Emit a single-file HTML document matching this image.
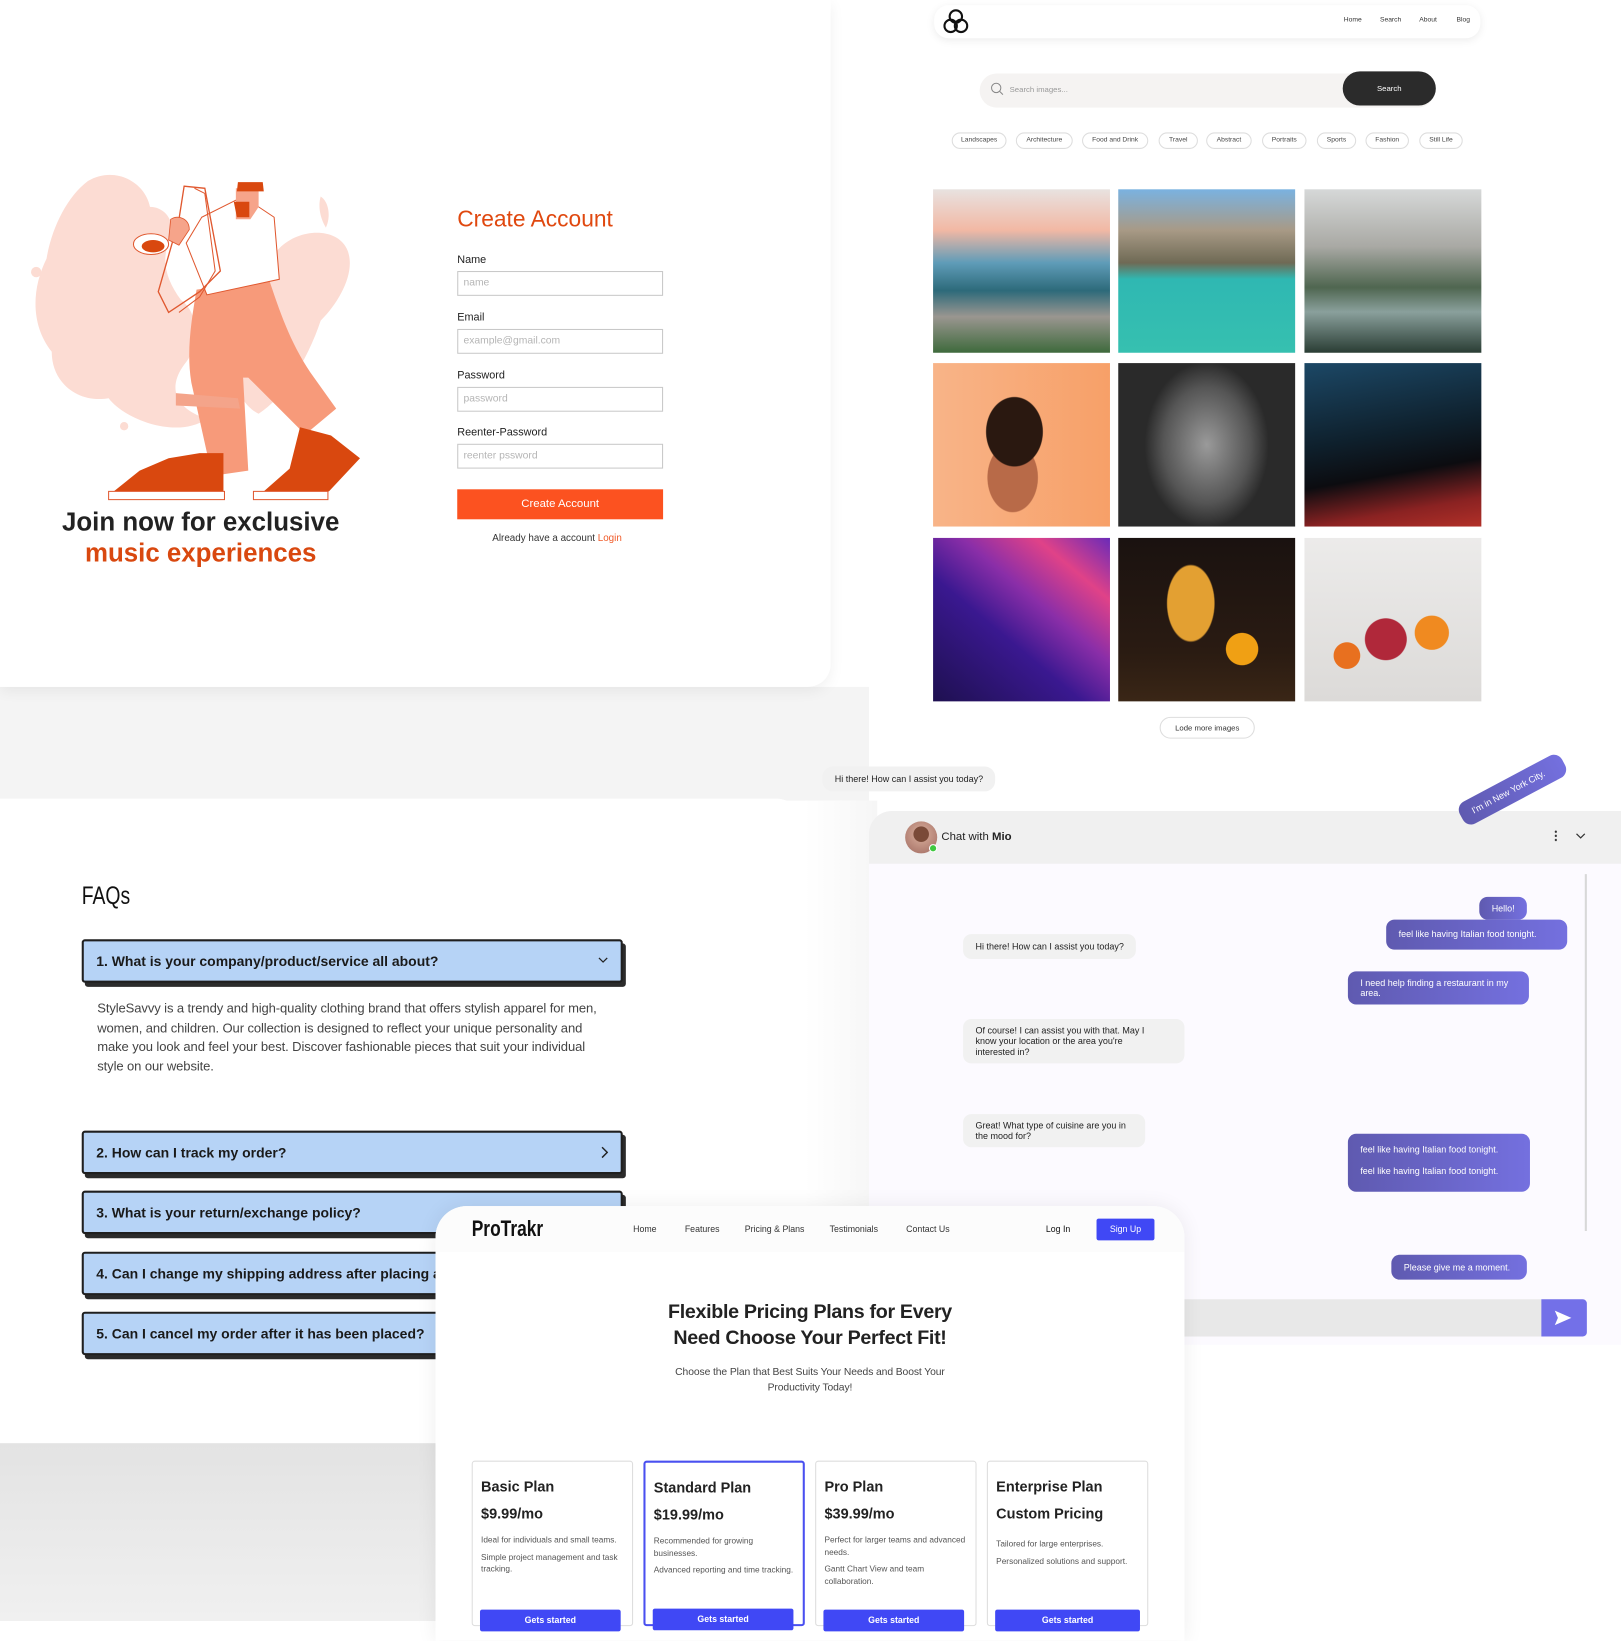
<!DOCTYPE html>
<html><head><meta charset="utf-8">
<style>
*{box-sizing:border-box;margin:0;padding:0}
html,body{width:1621px;height:1621px;overflow:hidden;background:#fff;font-family:"Liberation Sans",sans-serif}
#w{position:absolute;left:0;top:0;width:1567px;height:1567px;transform:scale(1.03446);transform-origin:0 0;background:#fff}
.a{position:absolute}
.card{position:absolute;background:#fff}
.inp{position:absolute;left:442px;width:199px;height:24px;border:1px solid #c8c8c8;font-size:10px;color:#b5b5b5;padding:5px 5px}
.lbl{position:absolute;left:442px;font-size:10.5px;color:#222}
.chip{position:absolute;top:128px;height:16px;border:1px solid #ddd;border-radius:9px;font-size:6.5px;color:#444;text-align:center;line-height:14px}
.img{position:absolute;width:171px;height:158px}
.faq{position:absolute;left:79px;width:523px;height:42px;background:#b6d3f6;border:2px solid #1f1f1f;border-radius:3px;box-shadow:3px 4px 0 #2b2b2b;font-size:13.5px;font-weight:bold;color:#1a1a1a;padding:12px 12px}
.bub{position:absolute;font-size:8.7px;line-height:10.5px;border-radius:8px;padding:0 12px;display:flex;align-items:center}
.bot{background:#f1f1f1;color:#222}
.usr{background:linear-gradient(90deg,#5f5ab0,#7470df);color:#fff}
.plan{position:absolute;top:1412px;width:156px;height:160px;border:1px solid #ddd;border-radius:3px;padding:16px 8px}
.plan h3{font-size:14px;color:#222;margin-bottom:10px}
.plan h4{font-size:14px;color:#222;margin-bottom:12px}
.plan p{font-size:8px;color:#555;line-height:11.5px;margin-bottom:5px}
.btn{position:absolute;left:7px;bottom:-6px;width:136px;height:21px;background:#4048f5;color:#fff;font-size:8.5px;font-weight:bold;text-align:center;line-height:21px;border-radius:2px}
</style></head><body><div id="w">
<div class="a" style="left:0;top:664px;width:840px;height:110px;background:#f4f4f4"></div>
<div class="a" style="left:0;top:1395px;width:430px;height:172px;background:linear-gradient(180deg,#e3e3e3,#f0f0f0)"></div>
<div class="a" style="left:778px;top:774px;width:70px;height:800px;background:linear-gradient(90deg,#fff,#f6f6f6)"></div>

<div class="card" style="left:0;top:0;width:803px;height:664px;border-bottom-right-radius:22px;box-shadow:0 4px 14px rgba(0,0,0,.06)">
<svg class="a" style="left:20px;top:160px" width="340" height="330" viewBox="20 160 340 330">
<path d="M85 175c25-15 55 0 60 25 15 0 25 15 20 30-10 20-5 40 10 60 15 10 20 40 5 60-20 25-10 45 20 55-30 20-80 0-95-20-30 5-55-15-55-45-20-25-20-60-5-90 5-30 20-60 40-75z" fill="#fcdcd3"/>
<path d="M270 240c20-20 55-20 65 0 10 20-5 50-25 70-10 30-30 70-60 90-20-10-30-40-20-70 5-30 20-70 40-90z" fill="#fcdcd3"/>
<path d="M310 190c8 5 10 20 5 30-5-8-8-20-5-30z" fill="#fcdcd3"/>
<circle cx="35" cy="263" r="5" fill="#fcdcd3"/><circle cx="120" cy="412" r="4" fill="#fcdcd3"/><circle cx="145" cy="345" r="3" fill="#fcdcd3"/>
<path d="M190 280l70-10c10 30 20 60 40 90l25 35-30 25-55-55-5 0 5 90-35 5-20-90c-5-30 0-60 5-90z" fill="#f79a7a"/>
<path d="M170 380l60 5 2 10-62-3z" fill="#f4a48a"/>
<path d="M195 210l40-20 30 20 5 60-70 15-20-50z" fill="#fff" stroke="#e0582f" stroke-width="1"/>
<path d="M178 180l20 2 15 80-20 20-30 20-10-20 20-70z" fill="none" stroke="#e0582f" stroke-width="1.3"/>
<path d="M188 182l10 5 10 75-15 25-20 15" fill="none" stroke="#e0582f" stroke-width="1"/>
<ellipse cx="146" cy="236" rx="17" ry="10" fill="#fff" stroke="#e0582f"/><ellipse cx="148" cy="238" rx="11" ry="6" fill="#d9480f"/>
<path d="M228 182h22v18l-8 12h-14z" fill="#f6a48a"/><path d="M230 176h24l1 9h-26z" fill="#d9480f"/><path d="M226 195h15v15h-12z" fill="#d9480f"/>
<path d="M165 212c8-5 18 0 18 10l-10 15-10-5z" fill="#f6a48a" stroke="#e0582f" stroke-width=".8"/>
<path d="M110 475l25-20 28-12 30-5 23 0 0 37z" fill="#d9480f"/><path d="M105 475h112v8H105z" fill="#fff" stroke="#e0582f"/>
<path d="M255 475l25-22 10-40 30 8 28 22-30 32z" fill="#d9480f"/><path d="M245 475h72v8h-72z" fill="#fff" stroke="#e0582f"/>
</svg>
<div class="a" style="left:0;top:490px;width:388px;text-align:center;font-size:25px;font-weight:bold;line-height:30px;color:#222">Join now for exclusive<br><span style="color:#d9480f">music experiences</span></div>
<div class="a" style="left:442px;top:199px;font-size:22px;color:#e0480f">Create Account</div>
<div class="lbl" style="top:245px">Name</div><div class="inp" style="top:262px">name</div>
<div class="lbl" style="top:301px">Email</div><div class="inp" style="top:318px">example@gmail.com</div>
<div class="lbl" style="top:357px">Password</div><div class="inp" style="top:374px">password</div>
<div class="lbl" style="top:412px">Reenter-Password</div><div class="inp" style="top:429px">reenter pssword</div>
<div class="a" style="left:442px;top:473px;width:199px;height:29px;background:#fc5220;color:#fff;font-size:11px;text-align:center;line-height:29px">Create Account</div>
<div class="a" style="left:442px;top:515px;width:193px;text-align:center;font-size:9.5px;color:#333">Already have a account <span style="color:#f05a28">Login</span></div>
</div>

<div class="a" style="left:903px;top:5px;width:528px;height:32px;background:#fff;border-radius:14px;box-shadow:0 2px 8px rgba(0,0,0,.08)"></div>
<svg class="a" style="left:911px;top:8px" width="26" height="26" viewBox="0 0 26 26" fill="none" stroke="#111" stroke-width="2"><circle cx="13" cy="8" r="6"/><circle cx="8" cy="17" r="6"/><circle cx="18" cy="17" r="6"/></svg>
<div class="a" style="left:1299px;top:16px;font-size:6.5px;color:#333">Home</div>
<div class="a" style="left:1334px;top:16px;font-size:6.5px;color:#333">Search</div>
<div class="a" style="left:1372px;top:16px;font-size:6.5px;color:#333">About</div>
<div class="a" style="left:1408px;top:16px;font-size:6.5px;color:#333">Blog</div>
<div class="a" style="left:947px;top:71px;width:440px;height:33px;background:#f5f3f2;border-radius:17px"></div>
<svg class="a" style="left:957px;top:79px" width="14" height="14" viewBox="0 0 14 14" fill="none" stroke="#888" stroke-width="1"><circle cx="6" cy="6" r="4.5"/><path d="M9.5 9.5l3 3"/></svg>
<div class="a" style="left:976px;top:82px;font-size:7.5px;color:#999">Search images...</div>
<div class="a" style="left:1298px;top:69px;width:90px;height:33px;background:#2b2b2b;border-radius:17px;color:#fff;font-size:7.5px;text-align:center;line-height:33px">Search</div>
<div class="chip" style="left:920px;width:53px">Landscapes</div>
<div class="chip" style="left:982px;width:55px">Architecture</div>
<div class="chip" style="left:1046px;width:64px">Food and Drink</div>
<div class="chip" style="left:1120px;width:38px">Travel</div>
<div class="chip" style="left:1166px;width:44px">Abstract</div>
<div class="chip" style="left:1220px;width:43px">Portraits</div>
<div class="chip" style="left:1273px;width:38px">Sports</div>
<div class="chip" style="left:1320px;width:42px">Fashion</div>
<div class="chip" style="left:1372px;width:42px">Still Life</div>

<div class="img" style="left:902px;top:183px;background:linear-gradient(180deg,#e8e2e0 0%,#f2b8a4 25%,#5f9cb8 45%,#2d6a7a 62%,#9a9690 78%,#3e6a3c 100%)"></div>
<div class="img" style="left:1081px;top:183px;background:linear-gradient(180deg,#7ab2e0 0%,#a89a86 25%,#6f6a55 45%,#2fb8b2 55%,#36c0b0 100%)"></div>
<div class="img" style="left:1261px;top:183px;background:linear-gradient(180deg,#d6d8d8 0%,#a9a9a4 35%,#4f6650 60%,#8aa09c 75%,#2a3d34 100%)"></div>
<div class="img" style="left:902px;top:351px;background:radial-gradient(ellipse 45px 55px at 46% 42%,#2a1810 60%,transparent 62%),radial-gradient(ellipse 40px 55px at 45% 70%,#b86a48 60%,transparent 62%),linear-gradient(90deg,#f8b488,#f7a068)"></div>
<div class="img" style="left:1081px;top:351px;background:radial-gradient(ellipse 60px 80px at 50% 50%,#9a9a9a,#555 70%,#2a2a2a)"></div>
<div class="img" style="left:1261px;top:351px;background:linear-gradient(170deg,#1c4866 0%,#0e1f2b 45%,#0c0c10 65%,#8a2222 85%,#b23028 100%)"></div>
<div class="img" style="left:902px;top:520px;background:linear-gradient(40deg,#1e1050 0%,#3a1890 40%,#8a2ea8 60%,#e04288 80%,#6a2bb8 100%)"></div>
<div class="img" style="left:1081px;top:520px;background:radial-gradient(ellipse 28px 45px at 41% 40%,#e3a032 80%,transparent 84%),radial-gradient(circle 17px at 70% 68%,#f0a014 90%,transparent 94%),linear-gradient(180deg,#1a1210,#2a1b12 70%,#3a2616)"></div>
<div class="img" style="left:1261px;top:520px;background:radial-gradient(circle 22px at 46% 62%,#b0283a 90%,transparent 94%),radial-gradient(circle 18px at 72% 58%,#f08a20 90%,transparent 94%),radial-gradient(circle 14px at 24% 72%,#e8701f 90%,transparent 94%),linear-gradient(180deg,#ecebea,#dcdad8)"></div>
<div class="a" style="left:1121px;top:693px;width:92px;height:21px;border:1px solid #ddd;border-radius:11px;font-size:7.5px;color:#333;text-align:center;line-height:19px;background:#fff">Lode more images</div>

<div class="card" style="left:0;top:772px;width:778px;height:623px;border-top-right-radius:28px"></div>
<div class="a" style="left:79px;top:853px;font-size:24px;font-family:'Liberation Sans Narrow','Liberation Sans',sans-serif;transform:scaleX(.78);transform-origin:0 0;color:#111">FAQs</div>
<div class="faq" style="top:908px">1. What is your company/product/service all about?<svg class="a" style="right:12px;top:14px" width="10" height="8" viewBox="0 0 10 8" fill="none" stroke="#222" stroke-width="1.2"><path d="M1 2l4 4 4-4"/></svg></div>
<div class="a" style="left:94px;top:966px;width:490px;font-size:12.6px;line-height:18.5px;color:#444;letter-spacing:-.1px">StyleSavvy is a trendy and high-quality clothing brand that offers stylish apparel for men, women, and children. Our collection is designed to reflect your unique personality and make you look and feel your best. Discover fashionable pieces that suit your individual style on our website.</div>
<div class="faq" style="top:1093px">2. How can I track my order?<svg class="a" style="right:12px;top:13px" width="8" height="12" viewBox="0 0 8 12" fill="none" stroke="#222" stroke-width="1.4"><path d="M2 1l5 5-5 5"/></svg></div>
<div class="faq" style="top:1151px">3. What is your return/exchange policy?</div>
<div class="faq" style="top:1210px;overflow:hidden;white-space:nowrap">4. Can I change my shipping address after placing an order?</div>
<div class="faq" style="top:1268px">5. Can I cancel my order after it has been placed?</div>

<div class="bub bot" style="left:795px;top:741px;height:24px;border-radius:10px">Hi there! How can I assist you today?</div>
<div class="card" style="left:840px;top:784px;width:740px;height:516px;background:#fcfaff;border-top-left-radius:22px;overflow:hidden">
<div class="a" style="left:0;top:0;width:740px;height:51px;background:#f0f0f0"></div>
</div>
<div class="a" style="left:875px;top:794px;width:31px;height:31px;border-radius:50%;background:radial-gradient(circle at 50% 40%,#7a4a38 30%,#c89a8a 32%,#a06a60)"></div>
<div class="a" style="left:898px;top:816px;width:8px;height:8px;border-radius:50%;background:#3fc83f;border:1px solid #fff"></div>
<div class="a" style="left:910px;top:803px;font-size:11px;color:#222">Chat with <b>Mio</b></div>
<div class="a" style="left:1503px;top:802px;width:2px;height:12px;background:radial-gradient(circle,#333 1px,transparent 1.2px) 0 0/2px 4px"></div>
<svg class="a" style="left:1523px;top:805px" width="10" height="7" viewBox="0 0 10 7" fill="none" stroke="#333" stroke-width="1.2"><path d="M1 1l4 4 4-4"/></svg>
<div class="bub usr" style="left:1407px;top:779px;width:112px;height:24px;transform:rotate(-28deg);transform-origin:0 0;border-radius:9px">I'm in New York City.</div>
<div class="a" style="left:1532px;top:845px;width:2px;height:345px;background:#d8d8d8"></div>
<div class="bub usr" style="left:1430px;top:867px;height:22px">Hello!</div>
<div class="bub usr" style="left:1340px;top:889px;width:175px;height:29px">feel like having Italian food tonight.</div>
<div class="bub bot" style="left:931px;top:903px;height:24px">Hi there! How can I assist you today?</div>
<div class="bub usr" style="left:1303px;top:939px;width:175px;height:32px">I need help finding a restaurant in my area.</div>
<div class="bub bot" style="left:931px;top:985px;width:214px;height:43px;padding-right:22px">Of course! I can assist you with that. May I know your location or the area you're interested in?</div>
<div class="bub bot" style="left:931px;top:1077px;width:176px;height:32px">Great! What type of cuisine are you in the mood for?</div>
<div class="bub usr" style="left:1303px;top:1096px;width:176px;height:56px;align-items:flex-start;padding-top:10px;flex-direction:column">feel like having Italian food tonight.<br><br>feel like having Italian food tonight.</div>
<div class="bub usr" style="left:1345px;top:1213px;width:131px;height:24px">Please give me a moment.</div>
<div class="a" style="left:1140px;top:1256px;width:350px;height:36px;background:#e8e8e8"></div>
<div class="a" style="left:1490px;top:1256px;width:44px;height:36px;background:#7370e8;border-radius:0 4px 4px 0"></div>
<svg class="a" style="left:1502px;top:1266px" width="18" height="16" viewBox="0 0 18 16"><path d="M1 1l16 7-16 7 3-7z" fill="#fff"/></svg>

<div class="card" style="left:421px;top:1166px;width:724px;height:420px;border-radius:30px 30px 0 0;box-shadow:0 0 20px rgba(0,0,0,.07)"></div>
<div class="a" style="left:421px;top:1166px;width:724px;height:44px;background:#fcfcfc;border-radius:30px 30px 0 0"></div>
<div class="a" style="left:456px;top:1177px;font-size:21px;font-weight:bold;color:#111;transform:scaleX(.8);transform-origin:0 0">ProTrakr</div>
<div class="a" style="left:612px;top:1183px;font-size:8.5px;color:#333">Home</div>
<div class="a" style="left:662px;top:1183px;font-size:8.5px;color:#333">Features</div>
<div class="a" style="left:720px;top:1183px;font-size:8.5px;color:#333">Pricing &amp; Plans</div>
<div class="a" style="left:802px;top:1183px;font-size:8.5px;color:#333">Testimonials</div>
<div class="a" style="left:876px;top:1183px;font-size:8.5px;color:#333">Contact Us</div>
<div class="a" style="left:1011px;top:1183px;font-size:8.5px;color:#111">Log In</div>
<div class="a" style="left:1060px;top:1178px;width:56px;height:21px;background:#4048f5;border-radius:2px;color:#fff;font-size:8.5px;text-align:center;line-height:21px">Sign Up</div>
<div class="a" style="left:623px;top:1256px;width:320px;text-align:center;font-size:19px;font-weight:bold;line-height:25px;color:#222;letter-spacing:-.3px">Flexible Pricing Plans for Every Need Choose Your Perfect Fit!</div>
<div class="a" style="left:643px;top:1319px;width:280px;text-align:center;font-size:10px;line-height:15px;color:#444;letter-spacing:-.1px">Choose the Plan that Best Suits Your Needs and Boost Your Productivity Today!</div>
<div class="plan" style="left:456px"><h3>Basic Plan</h3><h4>$9.99/mo</h4><p>Ideal for individuals and small teams.</p><p>Simple project management and task tracking.</p><div class="btn">Gets started</div></div>
<div class="plan" style="left:622px;border:2px solid #4a50f0"><h3>Standard Plan</h3><h4>$19.99/mo</h4><p>Recommended for growing businesses.</p><p>Advanced reporting and time tracking.</p><div class="btn">Gets started</div></div>
<div class="plan" style="left:788px"><h3>Pro Plan</h3><h4>$39.99/mo</h4><p>Perfect for larger teams and advanced needs.</p><p>Gantt Chart View and team collaboration.</p><div class="btn">Gets started</div></div>
<div class="plan" style="left:954px"><h3>Enterprise Plan</h3><h4 style="margin-bottom:16px">Custom Pricing</h4><p>Tailored for large enterprises.</p><p>Personalized solutions and support.</p><div class="btn" style="width:140px">Gets started</div></div>
</div></body></html>
